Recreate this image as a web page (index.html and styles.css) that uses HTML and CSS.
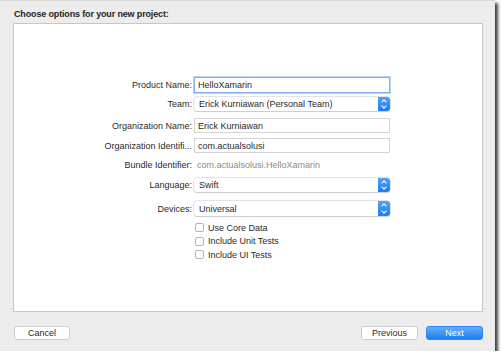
FILE: index.html
```html
<!DOCTYPE html>
<html lang="en">
<head>
  <meta charset="utf-8">
  <title>Choose options for your new project</title>
  <link rel="stylesheet" href="styles.css">
</head>
<body>
  <div class="window">
    <p class="heading">Choose options for your new project:</p>
    <div class="panel">
      <form class="options">
        <div class="row r-product">
          <label>Product Name:</label>
          <span class="input focus">HelloXamarin</span>
        </div>
        <div class="row r-team">
          <label>Team:</label>
          <span class="popup">Erick Kurniawan (Personal Team)<span class="stepper"></span></span>
        </div>
        <div class="row r-org">
          <label>Organization Name:</label>
          <span class="input">Erick Kurniawan</span>
        </div>
        <div class="row r-orgid">
          <label>Organization Identifi...</label>
          <span class="input">com.actualsolusi</span>
        </div>
        <div class="row r-bundle">
          <label>Bundle Identifier:</label>
          <span class="static">com.actualsolusi.HelloXamarin</span>
        </div>
        <div class="row r-lang">
          <label>Language:</label>
          <span class="popup">Swift<span class="stepper"></span></span>
        </div>
        <div class="row r-devices">
          <label>Devices:</label>
          <span class="popup">Universal<span class="stepper"></span></span>
        </div>
        <div class="checks">
          <div class="check"><span class="box"></span>Use Core Data</div>
          <div class="check"><span class="box"></span>Include Unit Tests</div>
          <div class="check"><span class="box"></span>Include UI Tests</div>
        </div>
      </form>
    </div>
    <div class="buttons">
      <button class="btn">Cancel</button>
      <span class="spacer"></span>
      <button class="btn">Previous</button>
      <button class="btn primary">Next</button>
    </div>
  </div>
</body>
</html>
```

FILE: styles.css
```css
html, body {
  margin: 0;
  background: #fff;
}
body {
  font-family: "Liberation Sans", Arial, sans-serif;
  font-size: 9px;
  color: #2a2a2a;
}
.window {
  box-sizing: border-box;
  width: 495px;
  height: 351px;
  padding: 0 12px 0 13px;
  background: #ececec;
  border-top: 1px solid #d9d9d9;
  box-shadow: 3px 3px 3px rgba(0, 0, 0, 0.75);
}
.heading {
  margin: 0;
  padding: 7px 0 3px 1px;
  line-height: 12px;
  color: #262626;
  font-weight: bold;
  letter-spacing: -0.15px;
}
.panel {
  box-sizing: border-box;
  height: 289px;
  background: #fff;
  border: 1px solid #c6c6c6;
}
.options {
  display: flex;
  flex-direction: column;
  padding-top: 53px;
}
.row {
  display: flex;
  align-items: center;
  height: 15px;
}
.row label {
  width: 178px;
  padding-right: 2px;
  text-align: right;
  color: #2a2a2a;
}
.r-product { height: 16px; }
.r-team { margin-top: 4px; height: 14px; }
.r-org { margin-top: 7px; }
.r-orgid { margin-top: 5px; }
.r-bundle { margin-top: 5px; height: 14px; }
.r-lang { margin-top: 6px; height: 14px; }
.r-devices { margin-top: 9px; }
.input, .popup {
  box-sizing: border-box;
  display: flex;
  align-items: center;
  width: 196px;
  height: 100%;
  background: #fff;
}
.input {
  padding-left: 3px;
  border: 1px solid #d4d4d4;
}
.input.focus {
  border: 1px solid #7eaef3;
  box-shadow: 0 0 0 1px #b8d3fa;
}
.static {
  padding-left: 3px;
  color: #8a8a8a;
}
.popup {
  position: relative;
  padding-left: 5px;
  border-radius: 3px;
  box-shadow: 0 0 0 0.5px #c8c8c8, 0 1px 1px rgba(0, 0, 0, 0.18);
}
.stepper {
  position: absolute;
  top: 0;
  right: 0;
  width: 12px;
  height: 100%;
  border-radius: 0 3px 3px 0;
  background: linear-gradient(#52a1fb, #1b7cf3);
}
.stepper::before,
.stepper::after {
  content: "";
  position: absolute;
  left: 4px;
  width: 3px;
  height: 3px;
  border: solid #fff;
  border-width: 1px 0 0 1px;
}
.stepper::before {
  top: 3px;
  transform: rotate(45deg);
}
.stepper::after {
  bottom: 3px;
  transform: rotate(-135deg);
}
.checks {
  display: flex;
  flex-direction: column;
  margin-top: 5px;
  padding-left: 181px;
}
.check {
  display: flex;
  align-items: center;
  height: 13.5px;
}
.box {
  box-sizing: border-box;
  width: 9px;
  height: 9px;
  margin-right: 4px;
  border: 1px solid #b4b4b4;
  border-radius: 2px;
  background: #fff;
}
.buttons {
  display: flex;
  gap: 8px;
  margin-top: 14px;
  padding-left: 1px;
}
.spacer {
  flex: 1;
}
.btn {
  box-sizing: border-box;
  width: 57px;
  height: 14px;
  padding: 0;
  font: inherit;
  color: #2a2a2a;
  background: #fff;
  border: 1px solid #cbcbcb;
  border-radius: 3px;
}
.btn:first-child {
  width: 56px;
}
.btn.primary {
  color: #fff;
  border-color: #2c86f5;
  background: linear-gradient(#66acfb, #1b7ef4);
}
```
